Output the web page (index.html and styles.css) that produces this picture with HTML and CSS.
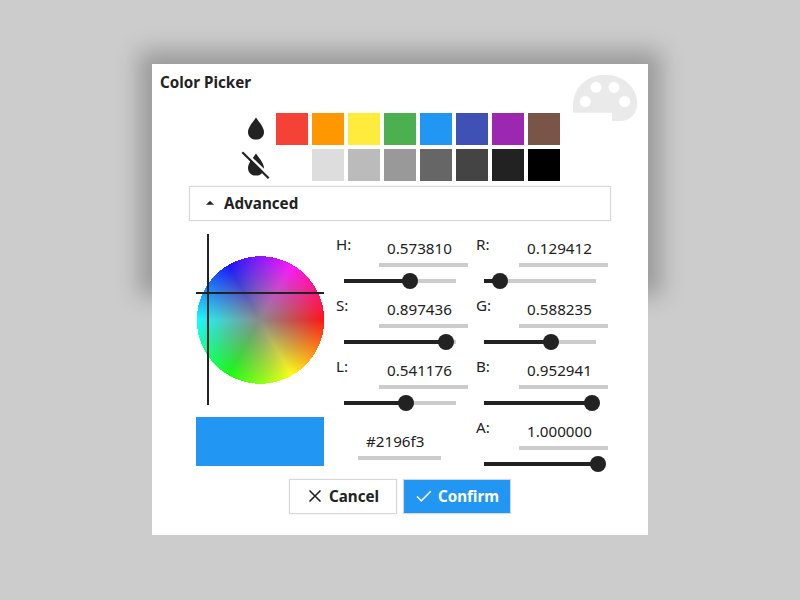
FILE: index.html
```html
<!DOCTYPE html>
<html lang="en">
<head>
<meta charset="utf-8">
<title>Color Picker</title>
<link rel="stylesheet" href="styles.css">
</head>
<body>
<div class="dialog">
  <div class="shade"></div>
  <main class="panel">
    <h1 class="title">Color Picker</h1>
    <svg class="palette" width="66" height="48" viewBox="572 74 66 48" fill="#eaeaea"><path fill-rule="evenodd" d="M573 112.7V107C573 87 587 74.7 605 74.7C623 74.7 637.2 87 637.2 103C637.2 114 630 121 620 121H612V112.7ZM579.8 101.5a5.5 5.5 0 1 0 11 0a5.5 5.5 0 1 0 -11 0M590.5 87.3a5.5 5.5 0 1 0 11 0a5.5 5.5 0 1 0 -11 0M608.5 87.3a5.5 5.5 0 1 0 11 0a5.5 5.5 0 1 0 -11 0M619.2 101.5a5.5 5.5 0 1 0 11 0a5.5 5.5 0 1 0 -11 0"/></svg>
    <div class="swatches">
      <svg width="32" height="32" viewBox="0 0 32 32"><path fill="#222" d="M16 4.5C18.5 8.5 24 14 24 18.9C24 23.5 20.5 26.6 16 26.6C11.5 26.6 8 23.5 8 18.9C8 14 13.5 8.5 16 4.5Z"/></svg>
      <i class="red"></i><i class="orange"></i><i class="yellow"></i><i class="green"></i><i class="blue"></i><i class="indigo"></i><i class="purple"></i><i class="brown"></i>
      <svg width="32" height="32" viewBox="0 0 32 32"><path fill="#222" d="M16 4.5C18.5 8.5 24 14 24 18.9C24 23.5 20.5 26.6 16 26.6C11.5 26.6 8 23.5 8 18.9C8 14 13.5 8.5 16 4.5Z"/><path stroke="#fff" stroke-width="2.6" d="M4 2.2L31 28.2"/><path stroke="#222" stroke-width="2.2" d="M2.3 3.3L28.7 29.2"/></svg>
      <i class="white"></i><i class="g1"></i><i class="g2"></i><i class="g3"></i><i class="g4"></i><i class="g5"></i><i class="g6"></i><i class="black"></i>
    </div>
    <button class="button advanced"><svg width="10" height="6" viewBox="0 0 10 6"><path fill="#222" d="M1 4.8L5 .8L9 4.8Z"/></svg>Advanced</button>
    <div class="editor">
      <div class="visual">
        <div class="wheel-box"><div class="wheel"></div><div class="line-v"></div><div class="line-h"></div></div>
        <div class="preview"></div>
      </div>
      <div class="column">
        <div class="channel"><label>H:</label><span class="value">0.573810</span><div class="track"><div class="fill" style="width:66px"></div></div></div>
        <div class="channel"><label>S:</label><span class="value">0.897436</span><div class="track"><div class="fill" style="width:102px"></div></div></div>
        <div class="channel"><label>L:</label><span class="value">0.541176</span><div class="track"><div class="fill" style="width:62px"></div></div></div>
        <span class="value hex">#2196f3</span>
      </div>
      <div class="column">
        <div class="channel"><label>R:</label><span class="value">0.129412</span><div class="track"><div class="fill" style="width:16px"></div></div></div>
        <div class="channel"><label>G:</label><span class="value">0.588235</span><div class="track"><div class="fill" style="width:67px"></div></div></div>
        <div class="channel"><label>B:</label><span class="value">0.952941</span><div class="track"><div class="fill" style="width:108px"></div></div></div>
        <div class="channel"><label>A:</label><span class="value">1.000000</span><div class="track"><div class="fill" style="width:114px"></div></div></div>
      </div>
    </div>
    <div class="actions">
      <button class="button"><svg width="16" height="16" viewBox="0 0 16 16"><path fill="none" stroke="#222" stroke-width="1.6" d="M2.5 2.5L13.5 13.5M13.5 2.5L2.5 13.5"/></svg>Cancel</button>
      <button class="button confirm"><svg width="16" height="16" viewBox="0 0 16 16"><path fill="none" stroke="#fff" stroke-width="1.6" d="M1 8.5L5.3 12.8L14.8 3.3"/></svg>Confirm</button>
    </div>
  </main>
</div>
</body>
</html>
```

FILE: styles.css
```css
* { box-sizing: border-box; }
body {
  margin: 0;
  height: 600px;
  overflow: hidden;
  background: #ccc;
  color: #222;
  font: 15.2px/20px "Noto Sans", sans-serif;
}
.dialog { position: relative; width: 496px; margin: 64px auto 0; }
.shade {
  position: absolute;
  inset: 0 0 auto;
  height: 219px;
  box-shadow: 0 0 22px 13px rgba(0, 0, 0, .25);
}
.panel {
  position: relative;
  height: 471px;
  padding: 8px;
  background: #fff;
}
.title { margin: 0; height: 41px; font-size: 15.2px; line-height: 20px; font-weight: 700; }
.palette { position: absolute; top: 10px; right: 10px; }
.swatches {
  display: grid;
  grid-template-columns: repeat(9, 32px);
  gap: 4px;
  width: 320px;
  margin-left: 80px;
}
.swatches i { height: 32px; }
.red { background: #f44336; }
.orange { background: #ff9800; }
.yellow { background: #ffeb3b; }
.green { background: #4caf50; }
.blue { background: #2196f3; }
.indigo { background: #3f51b5; }
.purple { background: #9c27b0; }
.brown { background: #795548; }
.white { background: #fff; }
.g1 { background: #ddd; }
.g2 { background: #bbb; }
.g3 { background: #999; }
.g4 { background: #666; }
.g5 { background: #444; }
.g6 { background: #222; }
.black { background: #000; }
.button {
  display: flex;
  align-items: center;
  justify-content: center;
  gap: 6px;
  width: 108px;
  height: 35px;
  padding: 0 0 1px;
  border: 1px solid #d8d8d8;
  box-shadow: 0 0 1px rgba(0, 0, 0, .15);
  background: #fff;
  color: #222;
  font: 700 15.2px/20px "Noto Sans", sans-serif;
}
.confirm { padding-left: 1px; background: #2196f3; color: #fff; }
.advanced {
  justify-content: flex-start;
  gap: 9px;
  width: 422px;
  margin: 5px 0 0 29px;
  padding-left: 15px;
}
.editor { display: flex; margin: 13px 0 0 36px; height: 245px; }
.visual { width: 140px; }
.wheel-box { position: relative; width: 128px; height: 171px; padding-top: 22px; }
.wheel {
  width: 128px;
  height: 128px;
  background:
    radial-gradient(circle, #8a8a8a, rgba(138, 138, 138, 0) 64px),
    conic-gradient(from 90deg, #ff1515, #ffff15, #15ff15, #15ffff, #1515ff, #ff15ff, #ff1515);
  mask-image: radial-gradient(circle at 64.5px 64px, #000 63.7px, transparent 63.7px);
}
.line-v { position: absolute; left: 11px; top: 0; width: 2px; height: 171px; background: #222; }
.line-h { position: absolute; left: 0; top: 58px; width: 128px; height: 2px; background: #222; }
.preview { width: 128px; height: 49px; margin-top: 12px; background: #2196f3; }
.column { width: 140px; }
.channel {
  display: grid;
  grid-template-columns: 43px 89px;
  grid-template-rows: 33px 28px;
}
.value {
  height: 33px;
  padding: 4px 8px 0;
  border-bottom: 4px solid #ccc;
}
.track {
  grid-column: 1 / -1;
  width: 112px;
  height: 4px;
  margin: 12px 0 0 8px;
  background: #ccc;
}
.fill { position: relative; height: 4px; background: #222; }
.fill::after {
  content: "";
  position: absolute;
  right: -8px;
  top: -6px;
  width: 16px;
  height: 16px;
  border-radius: 50%;
  background: #222;
}
.hex { display: block; width: 83px; margin: 10px 0 0 22px; }
.actions { display: flex; justify-content: center; gap: 6px; }
```
